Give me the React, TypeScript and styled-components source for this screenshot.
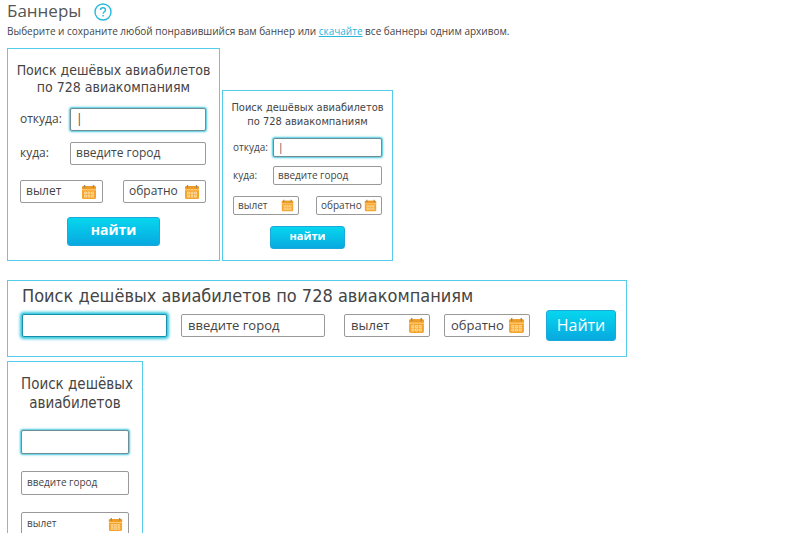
import React, { useId } from 'react';
import styled, { createGlobalStyle, css } from 'styled-components';

const GlobalStyle = createGlobalStyle`
  * { box-sizing: border-box; }
  body {
    margin: 0;
    background: #fff;
    color: #444;
    font-family: "Open Sans", sans-serif;
  }
`;

const tahoma = '"DejaVu Sans Condensed", "DejaVu Sans", sans-serif';

const Page = styled.main`
  height: 100vh;
  overflow: hidden;
  padding: 0 7px;
`;

const Header = styled.header`
  display: flex;
  align-items: center;
  gap: 13px;
  height: 23px;
`;

const Heading = styled.h1`
  margin: 0;
  padding-bottom: 2px;
  font: 400 17px/21px "Open Sans", sans-serif;
  color: #555;
`;

const HelpButton = styled.button`
  display: flex;
  margin: 0;
  padding: 0;
  border: 0;
  background: none;
  cursor: pointer;
`;

const Intro = styled.p`
  margin: 0 0 9px;
  font-size: 10px;
  line-height: 16px;
  color: #444;
`;

const Download = styled.a`
  color: #29b6dc;
  text-decoration: underline;
`;

const SquareBanners = styled.section`
  display: flex;
  flex-wrap: wrap;
  align-items: flex-end;
  gap: 2px;
  margin-bottom: 19px;
`;

const bannerFrame = css`
  border: 1px solid #55cdea;
  background: #fff;
`;

type Size = 'large' | 'small' | 'wide' | 'narrow';

const fieldSize = {
  large: { height: 23, font: 12, pad: 5, icon: 16 },
  small: { height: 19, font: 10, pad: 4, icon: 13 },
  wide: { height: 23, font: 13, pad: 6, icon: 17 },
  narrow: { height: 24, font: 10, pad: 5, icon: 15 },
};

const SquareForm = styled.form<{ $size: 'large' | 'small' }>`
  ${bannerFrame}
  display: flex;
  flex-direction: column;
  width: ${p => (p.$size === 'large' ? 213 : 171)}px;
  padding: ${p => (p.$size === 'large' ? '13px 0 14px' : '10px 0 11px')};
`;

const SquareFields = styled.div<{ $size: 'large' | 'small' }>`
  padding: ${p => (p.$size === 'large' ? '0 13px 0 12px' : '0 10px')};
`;

const Title = styled.h2<{ $size: Size }>`
  margin: 0;
  font-family: ${tahoma};
  font-weight: 400;
  color: #454545;
  white-space: nowrap;
  text-align: ${p => (p.$size === 'wide' ? 'left' : 'center')};
  font-size: ${p => ({ large: 14, small: 11, wide: 18, narrow: 15 })[p.$size]}px;
  line-height: ${p => ({ large: 17, small: 14, wide: 22, narrow: 19 })[p.$size]}px;
`;

const CityRows = styled.div<{ $size: 'large' | 'small' }>`
  display: grid;
  grid-template-columns: 1fr ${p => (p.$size === 'large' ? 136 : 109)}px;
  align-items: center;
  row-gap: ${p => (p.$size === 'large' ? 11 : 9)}px;
  margin: ${p => (p.$size === 'large' ? '12px 0 15px' : '9px 0 11px')};
`;

const Label = styled.label<{ $size: 'large' | 'small' }>`
  padding-bottom: 2px;
  font-size: ${p => (p.$size === 'large' ? 12 : 10)}px;
  line-height: 16px;
`;

const DateRow = styled.div`
  display: flex;
  justify-content: space-between;
`;

const FieldFrame = styled.span<{ $size: Size; $active?: boolean; $width?: number }>`
  display: flex;
  align-items: center;
  width: ${p => (p.$width ? `${p.$width}px` : '100%')};
  height: ${p => fieldSize[p.$size].height}px;
  padding: 0 ${p => (p.$size === 'wide' ? 4 : fieldSize[p.$size].pad)}px 0 ${p => fieldSize[p.$size].pad}px;
  border: 1px solid ${p => (p.$active ? (p.$size === 'wide' ? '#168fa8' : '#6f8d94') : '#999')};
  border-radius: 2px;
  background: #fff;
  box-shadow: ${p =>
    p.$active
      ? p.$size === 'wide'
        ? '0 0 3px 2px #2fc5de'
        : '0 0 2px 1px #45c8df'
      : 'none'};
`;

const FieldInput = styled.input<{ $size: Size }>`
  flex: 1;
  min-width: 0;
  width: 0;
  padding: 0 0 2px;
  border: 0;
  outline: 0;
  background: none;
  color: #444;
  font: ${p => fieldSize[p.$size].font}px/16px "Open Sans", sans-serif;
  &::placeholder { color: #444; opacity: 1; }
`;

const SearchButton = styled.button<{ $size: 'large' | 'small' | 'wide' }>`
  align-self: center;
  padding: 0 0 3px;
  border: 1px solid #1ba9da;
  border-radius: 3px;
  background: linear-gradient(#06d6ee, #08a9e0);
  color: #fff;
  cursor: pointer;
  ${p =>
    ({
      large: css`width: 93px; height: 29px; margin-top: 14px; font: 700 14px/18px "Open Sans", sans-serif;`,
      small: css`width: 75px; height: 23px; margin-top: 11px; font: 700 11px/14px "Open Sans", sans-serif;`,
      wide: css`width: 70px; height: 31px; padding-bottom: 1px; font: 400 16px/22px "Open Sans", sans-serif;`,
    })[p.$size]}
`;

const WideForm = styled.form`
  ${bannerFrame}
  max-width: 620px;
  margin-bottom: 4px;
  padding: 4px 10px 15px 14px;
`;

const WideFields = styled.div`
  display: flex;
  align-items: center;
  gap: 14px;
  margin-top: 3px;
`;

const WideCities = styled.div`
  display: flex;
  gap: 14px;
  margin-right: 5px;
`;

const WideAction = styled.div`
  display: flex;
  margin-left: 2px;
`;

const NarrowForm = styled.form`
  ${bannerFrame}
  display: flex;
  flex-direction: column;
  gap: 17px;
  width: 136px;
  min-height: 500px;
  padding: 13px;
`;

function HelpIcon() {
  return (
    <svg width="18" height="18" viewBox="0 0 18 18" fill="none" stroke="#29b9df" aria-hidden="true">
      <circle cx="9" cy="9" r="8" strokeWidth="1.4" />
      <path d="M6.5 7.1C6.5 5.6 7.5 4.8 9 4.8s2.5.8 2.5 2.1c0 1.8-2.4 1.8-2.4 3.8" strokeWidth="1.4" />
      <path d="M9.1 12v1.5" strokeWidth="1.5" />
    </svg>
  );
}

function CalendarIcon({ size }: { size: number }) {
  return (
    <svg width={size} height={size} viewBox="0 0 16 16" aria-hidden="true">
      <rect x="1" y="2" width="14" height="13" rx="1.5" fill="#f6a52c" />
      <path d="M1 5V3.5Q1 2 2.5 2h11Q15 2 15 3.5V5z" fill="#f09c22" />
      <path d="M3.5 1v3M12.5 1v3" stroke="#9c8a68" strokeWidth="1.3" />
      <path d="M1 5.8h14" stroke="#ffd995" strokeWidth=".8" />
      <path
        d="M3.5 8h2v2h-2zM7 8h2v2H7zM10.5 8h2v2h-2zM3.5 11.2h2v2h-2zM7 11.2h2v2H7zM10.5 11.2h2v2h-2z"
        fill="#f9b040"
        stroke="#ffe5b5"
        strokeWidth=".7"
      />
    </svg>
  );
}

type FieldProps = {
  size: Size;
  id?: string;
  label?: string;
  placeholder?: string;
  value?: string;
  active?: boolean;
  width?: number;
  calendar?: boolean;
};

function Field({ size, id, label, placeholder, value, active, width, calendar }: FieldProps) {
  return (
    <FieldFrame $size={size} $active={active} $width={width}>
      <FieldInput
        $size={size}
        id={id}
        type="text"
        aria-label={label}
        placeholder={placeholder}
        defaultValue={value}
      />
      {calendar && <CalendarIcon size={fieldSize[size].icon} />}
    </FieldFrame>
  );
}

function SquareBanner({ size }: { size: 'large' | 'small' }) {
  const id = useId();
  const dateWidth = size === 'large' ? 83 : 66;
  return (
    <SquareForm $size={size}>
      <Title $size={size}>
        Поиск дешёвых авиабилетов
        <br />
        по 728 авиакомпаниям
      </Title>
      <SquareFields $size={size}>
        <CityRows $size={size}>
          <Label $size={size} htmlFor={`${id}-from`}>откуда:</Label>
          <Field size={size} id={`${id}-from`} value="|" active />
          <Label $size={size} htmlFor={`${id}-to`}>куда:</Label>
          <Field size={size} id={`${id}-to`} placeholder="введите город" />
        </CityRows>
        <DateRow>
          <Field size={size} label="вылет" placeholder="вылет" width={dateWidth} calendar />
          <Field size={size} label="обратно" placeholder="обратно" width={dateWidth} calendar />
        </DateRow>
      </SquareFields>
      <SearchButton $size={size} type="button">найти</SearchButton>
    </SquareForm>
  );
}

export default function App() {
  return (
    <Page>
      <GlobalStyle />
      <Header>
        <Heading>Баннеры</Heading>
        <HelpButton type="button" aria-label="Помощь"><HelpIcon /></HelpButton>
      </Header>
      <Intro>
        Выберите и сохраните любой понравившийся вам баннер или{' '}
        <Download href="#archive">скачайте</Download> все баннеры одним архивом.
      </Intro>
      <SquareBanners>
        <SquareBanner size="large" />
        <SquareBanner size="small" />
      </SquareBanners>
      <WideForm>
        <Title $size="wide">Поиск дешёвых авиабилетов по 728 авиакомпаниям</Title>
        <WideFields>
          <WideCities>
            <Field size="wide" label="откуда" width={145} active />
            <Field size="wide" label="куда" placeholder="введите город" width={144} />
          </WideCities>
          <Field size="wide" label="вылет" placeholder="вылет" width={86} calendar />
          <Field size="wide" label="обратно" placeholder="обратно" width={86} calendar />
          <WideAction>
            <SearchButton $size="wide" type="button">Найти</SearchButton>
          </WideAction>
        </WideFields>
      </WideForm>
      <NarrowForm>
        <Title $size="narrow">
          Поиск дешёвых
          <br />
          авиабилетов
        </Title>
        <Field size="narrow" label="откуда" active />
        <Field size="narrow" label="куда" placeholder="введите город" />
        <Field size="narrow" label="вылет" placeholder="вылет" calendar />
      </NarrowForm>
    </Page>
  );
}
